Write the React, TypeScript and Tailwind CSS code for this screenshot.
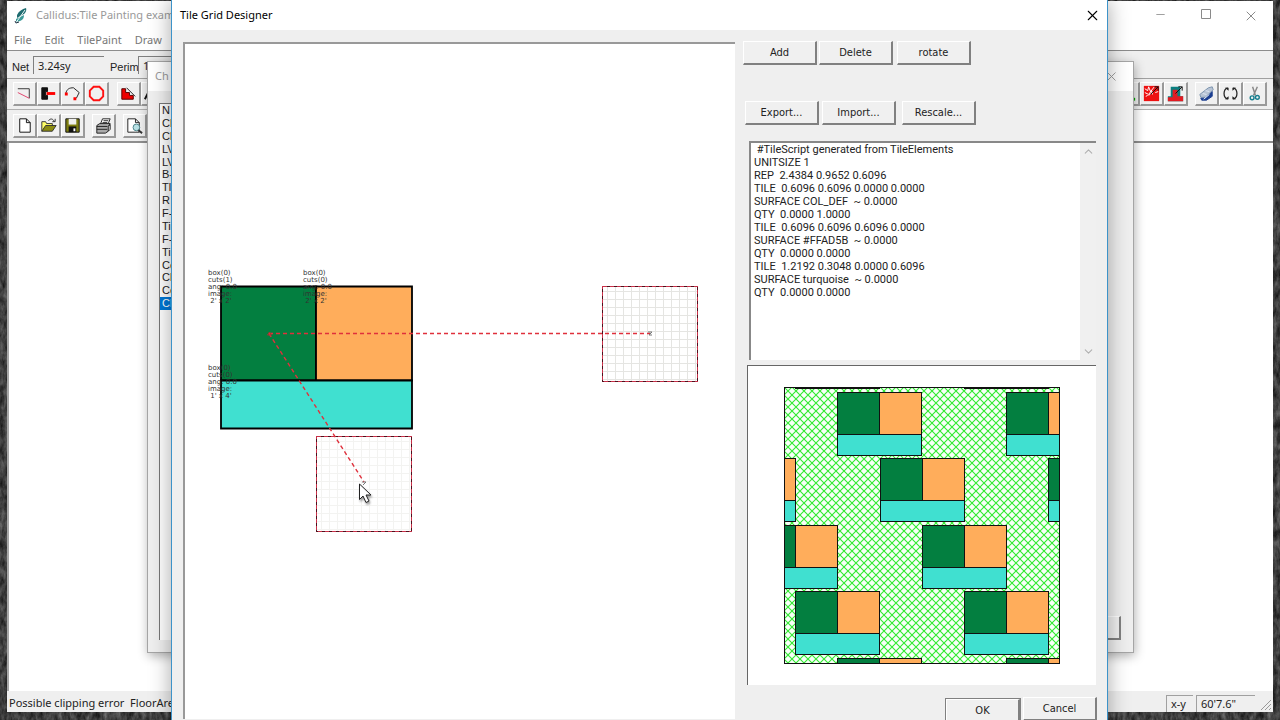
import React, { useState } from "react";
import { LuX, LuMinus, LuChevronUp, LuChevronDown } from "react-icons/lu";

const GREEN = "#037f40";
const ORANGE = "#ffad5b";
const TURQUOISE = "#40e0d0";

const tileScript = ` #TileScript generated from TileElements
UNITSIZE 1
REP  2.4384 0.9652 0.6096
TILE  0.6096 0.6096 0.0000 0.0000
SURFACE COL_DEF  ~ 0.0000
QTY  0.0000 1.0000
TILE  0.6096 0.6096 0.6096 0.0000
SURFACE #FFAD5B  ~ 0.0000
QTY  0.0000 0.0000
TILE  1.2192 0.3048 0.0000 0.6096
SURFACE turquoise  ~ 0.0000
QTY  0.0000 0.0000`;

const surfaces = [
  "N", "Cl", "Cl", "LV", "LV", "B-", "Tl", "R",
  "F-", "Ti", "F-", "Ti", "Ce", "Cl", "Ce", "Cl",
];

const App = () => {
  return (
    <div className="relative h-screen w-full overflow-hidden bg-[#3c3c3c] font-['Noto_Sans',sans-serif] text-[11px] text-[#222]">
      <Desktop />
      <MainWindow />
      <SurfaceWindow />
      <Designer />
    </div>
  );
};

const Desktop = () => (
  <svg className="absolute inset-0 h-full w-full" aria-hidden="true">
    <filter id="rock" colorInterpolationFilters="sRGB">
      <feTurbulence type="fractalNoise" baseFrequency="0.22 0.1" numOctaves="4" seed="4" />
      <feColorMatrix values="0.45 0 0 0 0.02  0.45 0 0 0 0.02  0.45 0 0 0 0.02  0 0 0 0 1" />
    </filter>
    <rect width="100%" height="100%" filter="url(#rock)" />
  </svg>
);

/* ---------- main Callidus window ---------- */

const MainWindow = () => (
  <div className="absolute top-px right-[7px] bottom-2 left-[7px] flex flex-col bg-white">
    <div className="flex h-[29px] items-center pl-1.5 text-[#999]">
      <Logo />
      <span className="ml-[7px]">Callidus:Tile Painting exam</span>
      <div className="ml-auto flex text-[#8a8a8a]">
        <button aria-label="Minimize" className="flex w-[45px] justify-center">
          <LuMinus size={13} strokeWidth={1.5} />
        </button>
        <button aria-label="Maximize" className="flex w-[45px] justify-center">
          <svg className="size-3" viewBox="0 0 12 12" fill="none" stroke="currentColor">
            <path d="M1.5 1.5h9v9h-9z" />
          </svg>
        </button>
        <button aria-label="Close" className="flex w-[45px] justify-center">
          <LuX size={16} strokeWidth={1.5} />
        </button>
      </div>
    </div>
    <nav className="flex h-[21px] items-center gap-[13px] border-b border-[#8c8c8c] pl-[7px] text-[#777]">
      <button>File</button>
      <button>Edit</button>
      <button>TilePaint</button>
      <button>Draw</button>
    </nav>

    <div className="flex h-7 items-center border-b border-[#a0a0a0] bg-[#efefef] pl-[5px]">
      <label htmlFor="net" className="mt-1.5 w-[21px] font-['Liberation_Sans',sans-serif]">Net</label>
      <input
        id="net"
        readOnly
        value="3.24sy"
        className="h-[18px] w-[71px] border-t border-l border-[#808080] bg-[#efefef] pl-1"
      />
      <label htmlFor="perim" className="mt-1.5 ml-1.5 w-7 font-['Liberation_Sans',sans-serif]">Perim</label>
      <input
        id="perim"
        readOnly
        value="18"
        className="h-[18px] w-[71px] border-t border-l border-[#808080] bg-[#efefef] pl-1"
      />
    </div>

    <div className="flex h-[31px] items-center justify-between border-b border-[#b0b0b0] bg-[#efefef] px-1.5">
      <div className="flex">
        <ToolButton label="Wall">
          <path d="M4 6h12v10" stroke="#333" />
          <path d="M4 10l12 6" stroke="#e0406a" />
        </ToolButton>
        <ToolButton label="Remove opening">
          <path d="M4 5h6v4h-2v4h2v4h-6z" fill="#111" stroke="#111" />
          <path d="M9 11h9" stroke="#f00" strokeWidth="3" />
        </ToolButton>
        <ToolButton label="Arc">
          <path d="M4 11C5 6 8 5 12 5l6 5-3 6" stroke="#222" />
          <path d="M3 10h3v3h-3zM12 15h3v3h-3z" fill="#f00" stroke="none" />
        </ToolButton>
        <ToolButton label="Ring">
          <path d="M8 4h6l4 4v6l-4 4h-6l-4-4v-6z" stroke="#f11" strokeWidth="2" />
        </ToolButton>
        <span className="w-2" />
        <ToolButton label="Stairs">
          <path d="M4 6h4v4h4v3h4v4h-12z" fill="#e00" stroke="#500" />
          <path d="M9 5l9 9" stroke="#222" />
        </ToolButton>
        <ToolButton label="Text">
          <path d="M3 17L9 5l6 12M5 13h8" stroke="#111" strokeWidth="2" />
        </ToolButton>
      </div>
      <div className="flex">
        <ToolButton label="Apply">
          <path d="M12 6l5 10" stroke="#111" strokeWidth="2" />
          <path d="M12 17h7" stroke="#0a0" strokeWidth="3" />
        </ToolButton>
        <ToolButton label="Fill random">
          <path d="M3 3h16v16H3z" fill="#ee1111" stroke="none" />
          <path d="M4 6l3 2 1-4 2 5 4-5M4 10l4 2 3-4 1 4M8 13l5-4M15 10l3-1M5 14l2-1" stroke="#fff" />
          <path d="M10 12l8-8m-4 0h4v4" stroke="#111" />
        </ToolButton>
        <ToolButton label="Fill surface">
          <path d="M6 4h10v10h3v5H3v-5h3z" fill="#0a7f80" stroke="none" />
          <path d="M8 7h5v7h6v5H3v-4h5z" fill="#e11b22" stroke="none" />
          <path d="M11 11l7-7m-4 0h4v4" stroke="#111" />
        </ToolButton>
        <span className="w-[7px]" />
        <ToolButton label="Layers">
          <path d="M4 12l9-7 4-1 1 3-8 8H5z" fill="#b8c4d4" stroke="#7b93ad" />
          <path d="M5 16h5l7-7v5l-6 4H6z" fill="#1c3f91" stroke="#1c3f91" />
          <path d="M7 11l4 1M10 8l4 1M8 17l6-5" stroke="#dfe8f4" />
        </ToolButton>
        <ToolButton label="Refresh">
          <path d="M8 5c-5 2-5 10 0 12M14 17c5-2 5-10 0-12" stroke="#222" strokeWidth="1.3" />
          <path d="M5 5h4v3zM5 17h4v-3zM17 17h-4v-3zM17 5h-4v3z" fill="#222" />
        </ToolButton>
        <ToolButton label="Cut">
          <path d="M9 4l3 9M14 4l-4 9" stroke="#888" strokeWidth="1.5" />
          <circle cx="8.5" cy="15.5" r="2" stroke="#177e8e" strokeWidth="1.5" />
          <circle cx="14" cy="15" r="2" stroke="#177e8e" strokeWidth="1.5" />
        </ToolButton>
      </div>
    </div>

    <div className="flex h-[33px] border-b-2 border-[#8f8f8f] bg-white">
      <div className="flex w-1/2 items-center bg-[#efefef] pl-1.5">
        <ToolButton label="New">
          <path d="M6 4h7l4 4v10H6zM13 4v4h4" fill="#fff" stroke="#111" />
        </ToolButton>
        <ToolButton label="Open">
          <path d="M4 17V7h4l1 2h6v3" fill="#ffff66" stroke="#333" />
          <path d="M4 17l4-6h11l-4 6z" fill="#8c8c10" stroke="#333" />
          <path d="M11 6c2-3 5-2 6 1m1-3v3h-3" stroke="#333" />
        </ToolButton>
        <ToolButton label="Save">
          <path d="M4 4h14v14H4z" fill="#7d7d10" stroke="#111" />
          <path d="M7 4h8v6H7z" fill="#eee" stroke="none" />
          <path d="M7 12h8v6H7z" fill="#111" stroke="none" />
          <path d="M12 14h2v3h-2z" fill="#fff" stroke="none" />
        </ToolButton>
        <span className="w-[7px]" />
        <ToolButton label="Print">
          <path d="M8 9l2-5h8l-2 5" fill="#fff" stroke="#222" />
          <path d="M4 11l3-2h11l-2 3v5l-3 2H4z" fill="#aaa" stroke="#222" />
          <path d="M4 12h11M4 15h11M11 6h5M10 8h5M16 12l2-2v5l-2 2" stroke="#222" />
        </ToolButton>
        <span className="w-[7px]" />
        <ToolButton label="Print preview">
          <path d="M4 4h8l4 4v10H4zM12 4v4h4" fill="#fff" stroke="#222" />
          <circle cx="13" cy="13" r="3.5" fill="#b8e0e4" stroke="#4a8288" />
          <path d="M15 16l4 3" stroke="#333" strokeWidth="2" />
        </ToolButton>
      </div>
    </div>

    <div className="flex-1 border-l-2 border-[#a8a8a8] bg-white" />

    <div className="flex h-[21px] items-center bg-[#efefef] pt-1 pl-0.5 whitespace-pre">
      <span>Possible clipping error  FloorAre</span>
      <span className="ml-auto flex h-[17px] w-[27px] items-center border-t border-l border-[#a0a0a0] pl-1">x-y</span>
      <span className="ml-[3px] flex h-[17px] w-[59px] items-center border-t border-l border-[#a0a0a0] pl-1">60'7.6"</span>
      <svg className="ml-1 h-4 w-3.5 self-end" viewBox="0 0 14 16" fill="none" stroke="#999">
        <path d="M2 14L12 4M6 14l6-6M10 14l2-2" />
      </svg>
    </div>
  </div>
);

const Logo = () => (
  <svg className="h-[18px] w-4" viewBox="0 0 16 18">
    <path d="M4 8C6 4 9 2 13 1c1 3-1 6-4 7L4 11z" fill="#1f6c70" />
    <path d="M3 12l8-4c0 3-1 5-4 6l-4 1z" fill="#3c9a98" />
    <path d="M2 17L12 3" stroke="#e8f4f4" />
    <path d="M2 14l1 2 3-1" fill="none" stroke="#234" />
  </svg>
);

type ToolButtonProps = { label: string; children: React.ReactNode };

const ToolButton = ({ label, children }: ToolButtonProps) => (
  <button
    aria-label={label}
    className="h-6 w-6 shrink-0 border border-r-2 border-b-2 border-white border-r-[#9a9a9a] border-b-[#9a9a9a] bg-[#f0f0f0]"
  >
    <svg className="h-[21px] w-[21px]" viewBox="0 0 22 22" fill="none">
      {children}
    </svg>
  </button>
);

/* ---------- window with the surface list ---------- */

const SurfaceWindow = () => (
  <div className="absolute top-[61px] right-[146px] bottom-[67px] left-[147px] flex flex-col border border-[#a5a5a5] bg-[#efefef] shadow-[1px_3px_10px_rgba(0,0,0,0.3)]">
    <div className="flex h-[29px] shrink-0 items-center bg-white pr-3.5 pl-[7px] text-[#999]">
      <span>Ch</span>
      <button aria-label="Close surfaces" className="ml-auto">
        <LuX size={15} strokeWidth={1.5} />
      </button>
    </div>
    <div className="flex min-h-0 flex-1 justify-between pt-3 pr-3 pb-3 pl-[11px]">
      <div className="w-52 border-t border-l border-[#777] bg-white">
        <ul className="flex h-[206px] flex-col font-['Liberation_Sans',sans-serif] leading-3">
          {surfaces.map((name, i) => (
            <li
              key={i}
              className={
                i === surfaces.length - 1
                  ? "flex-1 bg-[#0078d7] pl-0.5 text-white"
                  : "flex-1 pl-0.5"
              }
            >
              {name}
            </li>
          ))}
        </ul>
      </div>
      <DialogButton label="Close" className="self-end" />
    </div>
  </div>
);

/* ---------- tile grid designer dialog ---------- */

type DialogButtonProps = { label: string; className?: string };

const DialogButton = ({ label, className = "" }: DialogButtonProps) => (
  <button
    className={`h-6 w-[74px] shrink-0 border border-r-2 border-b-2 border-white border-r-[#808080] border-b-[#808080] bg-[#f0f0f0] pt-px font-['DejaVu_Sans_Condensed','DejaVu_Sans',sans-serif] text-[11px] ${className}`}
  >
    {label}
  </button>
);

const Designer = () => {
  const [script, setScript] = useState(tileScript);

  return (
    <div className="absolute top-0 right-[172px] -bottom-4 left-[171px] flex flex-col border-x border-[#3d93c9] bg-[#efefef] shadow-[0_0_20px_rgba(0,0,0,0.35)]">
      <div className="flex h-[30px] shrink-0 items-center bg-white pt-px pr-1.5 pl-2 text-black">
        <h1>Tile Grid Designer</h1>
        <button aria-label="Close designer" className="ml-auto">
          <LuX size={17} strokeWidth={1.5} />
        </button>
      </div>

      <div className="flex min-h-0 flex-1 gap-2 pt-3 pr-2.5 pl-[11px]">
        <div className="mb-[17px] min-w-0 flex-1 overflow-hidden border-t-2 border-l-2 border-[#999] bg-white">
          <TileCanvas />
        </div>

        <div className="-mt-px flex w-[354px] flex-col">
          <div className="flex gap-0.5">
            <DialogButton label="Add" />
            <DialogButton label="Delete" />
            <DialogButton label="rotate" className="ml-0.5" />
          </div>
          <div className="mt-9 flex gap-[3px] pl-0.5">
            <DialogButton label="Export..." />
            <DialogButton label="Import..." />
            <DialogButton label="Rescale..." className="ml-[3px]" />
          </div>

          <div className="mt-4 mr-px ml-1.5 flex h-[219px] shrink-0 border-t-2 border-l-2 border-[#888] bg-white">
            <textarea
              aria-label="Tile script"
              value={script}
              onChange={(e) => setScript(e.target.value)}
              className="min-w-0 flex-1 resize-none overflow-hidden pl-[3px] font-['Roboto',sans-serif] text-[11px] leading-[13px] outline-none"
            />
            <div className="flex w-4 flex-col items-center justify-between bg-[#f0f0f0] py-0.5 text-[#b0b0b0]">
              <button aria-label="Scroll up">
                <LuChevronUp size={13} />
              </button>
              <button aria-label="Scroll down">
                <LuChevronDown size={13} />
              </button>
            </div>
          </div>

          <div className="mt-[5px] mr-px ml-1 flex h-80 shrink-0 items-center justify-center border-t border-l border-[#666] bg-white">
            <PatternPreview />
          </div>

          <div className="mt-3 flex justify-end gap-[3px]">
            <DialogButton label="OK" className="mt-0.5 outline outline-[#808080]" />
            <DialogButton label="Cancel" />
          </div>
        </div>
      </div>
    </div>
  );
};

type TileLabelProps = { x: number; y: number; lines: string[] };

const TileLabel = ({ x, y, lines }: TileLabelProps) => (
  <text x={x} y={y} className="font-['DejaVu_Sans',sans-serif] text-[7px] whitespace-pre" fill="#333">
    {lines.map((line, i) => (
      <tspan key={i} x={x} y={y + i * 7}>
        {line}
      </tspan>
    ))}
  </text>
);

type GhostTileProps = { x: number; y: number; opacity: number };

// Placeholder that marks where the repeat lands
const GhostTile = ({ x, y, opacity }: GhostTileProps) => {
  const lines = Array.from({ length: 12 }, (_, i) => 5 + i * 8);

  return (
    <g transform={`translate(${x} ${y})`} shapeRendering="crispEdges" fill="none">
      <g stroke="#d8d8d4" opacity={opacity}>
        {lines.map((n) => (
          <path key={n} d={`M${n + 0.5} 0V95M0 ${n + 0.5}H95`} />
        ))}
      </g>
      <path d="M.5 .5h95v95h-95z" stroke="#50101c" />
      <path d="M.5 .5h95v95h-95z" stroke="#c83048" strokeDasharray="4 3" />
    </g>
  );
};

// Canvas units are screen pixels, offset by the canvas origin
const TileCanvas = () => (
  <svg width="549" height="676" viewBox="185 44 549 676">
    <GhostTile x={602} y={286} opacity={0.65} />
    <GhostTile x={316} y={436} opacity={0.3} />
    <g stroke="#000" strokeWidth="1.8">
      <path d="M221 286.500h95v94h-95z" fill={GREEN} />
      <path d="M316 286.500h96v94h-96z" fill={ORANGE} />
      <path d="M221 380.500h191v48h-191z" fill={TURQUOISE} />
    </g>
    <TileLabel x={208} y={275} lines={["box(0)", "cuts(1)", "ang: 0.0", "image:", " 2' x 2'"]} />
    <TileLabel x={303} y={275} lines={["box(0)", "cuts(0)", "ang: 0.0", "image:", " 2' x 2'"]} />
    <TileLabel x={208} y={370} lines={["box(0)", "cuts(0)", "ang: 0.0", "image:", " 1' x 4'"]} />
    <g stroke="#e0303c" strokeWidth="1.4" strokeDasharray="4 3" fill="none">
      <path d="M269 333.500H650" />
      <path d="M269 333.500L364 482" />
    </g>
    <path d="M267.500 335l2-3 2 3z" fill="none" stroke="#a33" />
    <path d="M648 332h4l-3 3h3M362 482h4l-3 3" fill="none" stroke="#777" />
    <path
      d="M359.500 484v15.500l3.500-3.500 3 6.500 3-1.500-3-6h5z"
      fill="#fff"
      stroke="#222"
      className="drop-shadow-[1px_2px_1px_rgba(0,0,0,0.4)]"
    />
  </svg>
);

const PatternPreview = () => {
  const blocks: { x: number; y: number }[] = [];
  for (let row = -1; row <= 4; row++) {
    for (let col = -2; col <= 2; col++) {
      blocks.push({
        x: Math.round(53.4 + row * 42.2 + col * 168.8),
        y: Math.floor(4.7 + row * 66.7) + (row === 0 ? 1 : 0),
      });
    }
  }

  return (
    <svg width="276" height="277" viewBox="0 0 276 277">
      <defs>
        <pattern id="hatch" width="8" height="8" patternUnits="userSpaceOnUse">
          <rect width="8" height="8" fill="#f8fff8" />
          <path d="M-1 -1l10 10M9 -1l-10 10" stroke="#30ea30" strokeWidth="1.1" />
        </pattern>
      </defs>
      <rect width="276" height="277" fill="url(#hatch)" />
      <g shapeRendering="crispEdges" stroke="#111">
        {blocks.map(({ x, y }, i) => (
          <g key={i} transform={`translate(${x} ${y})`}>
            <path d="M.5 .5h42v42h-42z" fill={GREEN} />
            <path d="M42.500 .5h42v42h-42z" fill={ORANGE} />
            <path d="M.5 42.500h84v21h-84z" fill={TURQUOISE} />
          </g>
        ))}
        <path d="M.5 .5h275v276h-275z" fill="none" />
      </g>
    </svg>
  );
};

export default App;
